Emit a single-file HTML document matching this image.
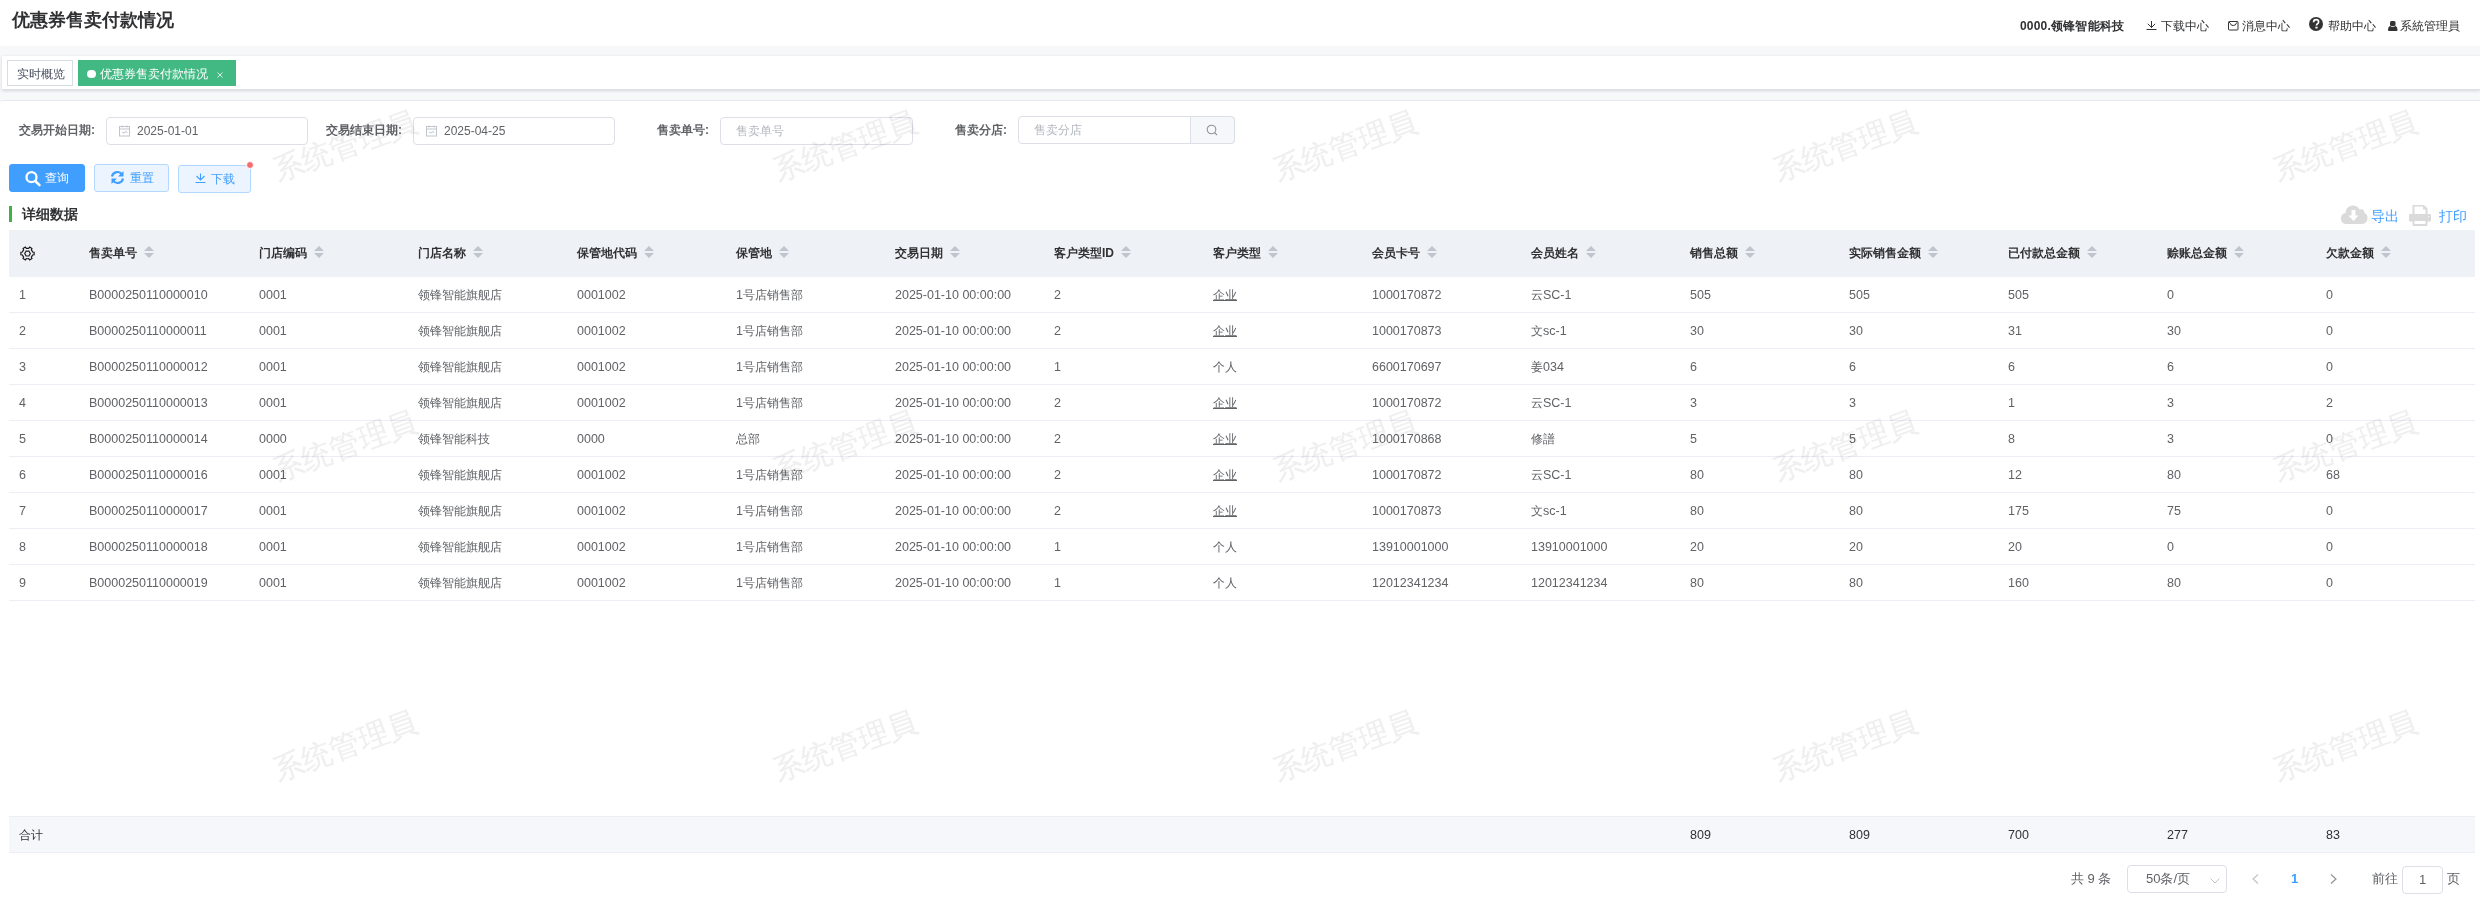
<!DOCTYPE html>
<html><head><meta charset="utf-8">
<style>
*{box-sizing:border-box;margin:0;padding:0}
html,body{width:2480px;height:901px;overflow:hidden;background:#fff;font-family:"Liberation Sans",sans-serif;font-size:12px;color:#606266;position:relative}
.abs{position:absolute}
/* header */
#title{position:absolute;left:12px;top:8px;font-size:18px;font-weight:bold;color:#303133;line-height:24px;white-space:nowrap}
.hr{position:absolute;top:18px;line-height:16px;font-size:12px;color:#303133;white-space:nowrap}
.hr svg{position:absolute}
#band{position:absolute;left:0;top:46px;width:2480px;height:55px;background:#f6f8fa}
#tabs{position:absolute;left:2px;top:56px;width:2478px;height:34px;background:#fff;border-bottom:1px solid #dde1e8;box-shadow:0 1px 3px 0 rgba(0,0,0,.12),0 0 3px 0 rgba(0,0,0,.04)}
.tag{position:absolute;top:4px;height:26px;line-height:26px;font-size:12px;white-space:nowrap}
#tag1{left:5px;width:66px;border:1px solid #d8dce5;color:#495060;background:#fff;padding-left:9px}
#tag2{left:76px;width:158px;background:#42b983;color:#fff;padding-left:22px;line-height:28px}
#tag2:before{content:"";position:absolute;left:9px;top:9.5px;width:8.5px;height:8.5px;border-radius:50%;background:#fff}
#tag2 .x{position:absolute;left:138px;top:11px}
#content{position:absolute;left:0;top:100px;width:2480px;height:801px;background:#fff;border-top:1px solid #e6e9f0;border-radius:3px 0 0 0}
/* form */
.lbl{position:absolute;top:122px;line-height:16px;font-weight:bold;color:#606266;white-space:nowrap}
.inp{position:absolute;height:28px;border:1px solid #dcdfe6;border-radius:4px;background:#fff;line-height:26px;white-space:nowrap}
.inp .t{position:absolute;top:0}
.ph{color:#b4b7be}
/* buttons */
.btn{position:absolute;height:28px;border-radius:3px;line-height:26px;white-space:nowrap;font-size:12px}
#b1{left:9px;top:164px;width:76px;background:#409eff;border:1px solid #409eff;color:#fff}
#b2{left:94px;top:164px;width:75px;background:#ecf5ff;border:1px solid #b3d8ff;color:#409eff}
#b3{left:178px;top:165px;width:73px;background:#ecf5ff;border:1px solid #b3d8ff;color:#409eff}
.btn svg{position:absolute}
.btn .t{position:absolute;top:0}
#dot{position:absolute;left:246px;top:161px;width:8px;height:8px;border-radius:50%;background:#f56c6c;border:1px solid #fff}
#secbar{position:absolute;left:9px;top:206px;width:3px;height:16px;background:#3eb149}
#sectitle{position:absolute;left:22px;top:206px;line-height:16px;font-size:14px;font-weight:bold;color:#303133}
/* table */
#thead{position:absolute;left:9px;top:230px;width:2466px;height:47px;background:#eef1f6}
.th{position:absolute;top:245px;line-height:16px;font-weight:bold;color:#303133;white-space:nowrap}
.th .sort{position:absolute;right:-17px;top:1px}
.gear{position:absolute;left:19.5px;top:245.5px}
.tr{position:absolute;left:9px;width:2466px;height:36px;border-bottom:1px solid #ebeef5}
.td{position:absolute;top:10px;line-height:16px;white-space:nowrap;color:#606266}
.tr .td{margin-left:-9px}
#tfoot{position:absolute;left:9px;top:816px;width:2466px;height:37px;background:#f5f7fa;border-top:1px solid #ebeef5;border-bottom:1px solid #ebeef5}
.tf{position:absolute;top:827px;line-height:16px;color:#303133;white-space:nowrap}
.n{font-size:12.5px}
/* export/print */
.link{position:absolute;top:208px;line-height:16px;font-size:14px;color:#409eff;white-space:nowrap}
/* pagination */
.pg{position:absolute;line-height:16px;font-size:13px;color:#606266;white-space:nowrap}
/* watermark */
.wm{position:absolute;width:160px;height:36px;line-height:36px;text-align:center;font-size:30px;color:#efefef;-webkit-text-stroke:0.25px #efefef;mix-blend-mode:multiply;transform:rotate(-20deg);white-space:nowrap;pointer-events:none}
</style></head>
<body>
<div id="title">优惠券售卖付款情况</div>
<div class="hr" style="left:2020px;font-weight:bold;letter-spacing:0.2px">0000.领锋智能科技</div>
<svg class="abs" width="12" height="12" viewBox="0 0 12 12" style="left:2146px;top:20px"><path d="M5.5 1 V7.5 M1.8 3.8 L5.5 7.5 L9.2 3.8 M0.5 9.5 H10.5" fill="none" stroke="#333" stroke-width="1"/></svg>
<div class="hr" style="left:2161px">下载中心</div>
<svg class="abs" width="12" height="12" viewBox="0 0 12 12" style="left:2228px;top:21px"><rect x="0.5" y="0.5" width="9.5" height="8.5" rx="0.8" fill="none" stroke="#333" stroke-width="1"/><path d="M1 1 L2.3 2.3 Q2.5 4.5 5.25 4.5 Q8 4.5 8.2 2.3 L9.5 1" fill="none" stroke="#333" stroke-width="1"/></svg>
<div class="hr" style="left:2242px">消息中心</div>
<svg class="abs" width="15" height="15" viewBox="0 0 15 15" style="left:2309px;top:17px"><circle cx="7" cy="7" r="7" fill="#333"/><path d="M4.6 5.2 Q4.6 2.6 7.1 2.6 Q9.6 2.6 9.6 4.9 Q9.6 6.2 8.2 6.9 Q7.5 7.3 7.5 8.6" fill="none" stroke="#fff" stroke-width="1.7"/><rect x="6.4" y="9.7" width="2.2" height="1.8" fill="#fff"/></svg>
<div class="hr" style="left:2328px">帮助中心</div>
<svg class="abs" width="11" height="12" viewBox="0 0 11 12" style="left:2388px;top:21px"><rect x="2" y="0" width="5.5" height="5" rx="1.5" fill="#333"/><path d="M2.2 4.8 L3.3 5.8 H6.2 L7.3 4.8 Q9.5 6 9.5 8.5 V9 Q9.5 10 8.5 10 H1 Q0 10 0 9 V8.5 Q0 6 2.2 4.8 Z" fill="#333"/></svg>
<div class="hr" style="left:2400px">系統管理員</div>

<div id="band"></div>
<div id="tabs">
  <div class="tag" id="tag1">实时概览</div>
  <div class="tag" id="tag2">优惠券售卖付款情况<svg class="x" width="8" height="8" viewBox="0 0 8 8"><path d="M1.5 1.5 L6.5 6.5 M6.5 1.5 L1.5 6.5" stroke="#fff" stroke-width="0.8"/></svg></div>
</div>
<div id="content"></div>

<div class="lbl" style="left:19px">交易开始日期:</div>
<div class="inp" style="left:106px;top:117px;width:202px"><svg width="12" height="12" viewBox="0 0 12 12" style="position:absolute;left:12px;top:7px"><rect x="0.5" y="1.5" width="10" height="9.5" fill="none" stroke="#c0c4cc" stroke-width="1"/><path d="M0.5 4 H10.5 M3 0.5 V2.5 M8 0.5 V2.5 M3 7 L5 8 L7 6.5 L8.5 7.5" fill="none" stroke="#c0c4cc" stroke-width="1"/></svg><span class="t" style="left:30px">2025-01-01</span></div>
<div class="lbl" style="left:326px">交易结束日期:</div>
<div class="inp" style="left:413px;top:117px;width:202px"><svg width="12" height="12" viewBox="0 0 12 12" style="position:absolute;left:12px;top:7px"><rect x="0.5" y="1.5" width="10" height="9.5" fill="none" stroke="#c0c4cc" stroke-width="1"/><path d="M0.5 4 H10.5 M3 0.5 V2.5 M8 0.5 V2.5 M3 7 L5 8 L7 6.5 L8.5 7.5" fill="none" stroke="#c0c4cc" stroke-width="1"/></svg><span class="t" style="left:30px">2025-04-25</span></div>
<div class="lbl" style="left:657px">售卖单号:</div>
<div class="inp" style="left:720px;top:117px;width:193px"><span class="t ph" style="left:15px">售卖单号</span></div>
<div class="lbl" style="left:955px">售卖分店:</div>
<div class="inp" style="left:1018px;top:116px;width:217px;background:#fff"><span class="t ph" style="left:15px">售卖分店</span>
  <div style="position:absolute;left:171px;top:-1px;width:45px;height:28px;background:#f5f7fa;border:1px solid #dcdfe6;border-radius:0 4px 4px 0"></div>
  <svg width="12" height="12" viewBox="0 0 12 12" style="position:absolute;left:187px;top:7px"><circle cx="5.5" cy="5.5" r="4.3" fill="none" stroke="#909399" stroke-width="1.1"/><path d="M8.5 8.5 L11 11" stroke="#909399" stroke-width="1.1"/></svg>
</div>

<div class="btn" id="b1"><svg width="17" height="17" viewBox="0 0 17 17" style="left:15px;top:5px"><circle cx="6.5" cy="7.2" r="5" fill="none" stroke="#fff" stroke-width="2.3"/><path d="M10.2 11 L14.5 15.2" stroke="#fff" stroke-width="2.5" stroke-linecap="round"/></svg><span class="t" style="left:35px">查询</span></div>
<div class="btn" id="b2"><svg width="15" height="15" viewBox="0 0 15 15" style="left:15px;top:5px"><path d="M2 6.5 A5.5 5.5 0 0 1 12 4.5" fill="none" stroke="#409eff" stroke-width="2.2"/><path d="M13.5 1 V6.5 H8 Z" fill="#409eff"/><path d="M13 8.5 A5.5 5.5 0 0 1 3 10.5" fill="none" stroke="#409eff" stroke-width="2.2"/><path d="M1.5 14 V8.5 H7 Z" fill="#409eff"/></svg><span class="t" style="left:35px">重置</span></div>
<div class="btn" id="b3"><svg width="12" height="12" viewBox="0 0 12 12" style="left:15.5px;top:7px"><path d="M5.5 0.5 V7 M1.5 3 L5.5 7 L9.5 3 M0.5 9.5 H10.5" fill="none" stroke="#409eff" stroke-width="1.1"/></svg><span class="t" style="left:32px;top:-0.5px">下载</span></div>
<div id="dot"></div>

<div id="secbar"></div>
<div id="sectitle">详细数据</div>

<svg width="27" height="20" viewBox="0 0 27 20" style="position:absolute;left:2341px;top:205px"><path d="M6 19 Q0 19 0 13.5 Q0 8.5 4.5 8 Q5 1 11.5 0.5 Q16.5 0.5 18.5 4.5 Q19.5 4 21 4.2 Q23 4.5 23.5 8 Q27 9.5 26.5 13.5 Q26 19 20 19 Z" fill="#dadada"/><path d="M10.5 5 H14.5 V10.5 H17.5 L12.5 16 L7.5 10.5 H10.5 Z" fill="#fff"/></svg>
<div class="link" style="left:2371px">导出</div>
<svg width="23" height="21" viewBox="0 0 23 21" style="position:absolute;left:2409px;top:205px"><path d="M3.5 0 H15 L18.5 3.5 V9 H3.5 Z" fill="#dadada"/><path d="M5.5 1.5 H14 V4.5 H16.5 V9.5 H5.5 Z" fill="#fff"/><rect x="0" y="9" width="22" height="7.5" rx="1" fill="#dadada"/><path d="M3.5 14 H18.5 V21 H3.5 Z" fill="#dadada"/><rect x="5.5" y="16" width="11" height="3" fill="#fff"/><path d="M19 10.5 L20.5 12 L19 12 Z" fill="#fff"/></svg>
<div class="link" style="left:2439px">打印</div>

<div id="thead"></div>
<svg class="gear" width="15" height="15" viewBox="0 0 14 14"><path d="M11.24 9.45 L11.69 8.43 L13.18 8.20 L13.18 5.80 L11.69 5.57 L11.24 4.55 L10.58 3.66 L11.13 2.25 L9.05 1.04 L8.10 2.23 L7.00 2.10 L5.90 2.23 L4.95 1.04 L2.87 2.25 L3.42 3.66 L2.76 4.55 L2.31 5.57 L0.82 5.80 L0.82 8.20 L2.31 8.43 L2.76 9.45 L3.42 10.34 L2.87 11.75 L4.95 12.96 L5.90 11.77 L7.00 11.90 L8.10 11.77 L9.05 12.96 L11.13 11.75 L10.58 10.34 Z" fill="none" stroke="#1a1a1a" stroke-width="1.1" stroke-linejoin="miter"/><path d="M4.4 7 L5.7 4.7 H8.3 L9.6 7 L8.3 9.3 H5.7 Z" fill="none" stroke="#1a1a1a" stroke-width="1.1"/></svg>
<div class="th" style="left:89px">售卖单号<svg class="sort" width="10" height="13" viewBox="0 0 10 13"><path d="M5 0 L10 5 L0 5 Z" fill="#bfc4cd"/><path d="M0 7 L10 7 L5 12 Z" fill="#bfc4cd"/></svg></div>
<div class="th" style="left:259px">门店编码<svg class="sort" width="10" height="13" viewBox="0 0 10 13"><path d="M5 0 L10 5 L0 5 Z" fill="#bfc4cd"/><path d="M0 7 L10 7 L5 12 Z" fill="#bfc4cd"/></svg></div>
<div class="th" style="left:418px">门店名称<svg class="sort" width="10" height="13" viewBox="0 0 10 13"><path d="M5 0 L10 5 L0 5 Z" fill="#bfc4cd"/><path d="M0 7 L10 7 L5 12 Z" fill="#bfc4cd"/></svg></div>
<div class="th" style="left:577px">保管地代码<svg class="sort" width="10" height="13" viewBox="0 0 10 13"><path d="M5 0 L10 5 L0 5 Z" fill="#bfc4cd"/><path d="M0 7 L10 7 L5 12 Z" fill="#bfc4cd"/></svg></div>
<div class="th" style="left:736px">保管地<svg class="sort" width="10" height="13" viewBox="0 0 10 13"><path d="M5 0 L10 5 L0 5 Z" fill="#bfc4cd"/><path d="M0 7 L10 7 L5 12 Z" fill="#bfc4cd"/></svg></div>
<div class="th" style="left:895px">交易日期<svg class="sort" width="10" height="13" viewBox="0 0 10 13"><path d="M5 0 L10 5 L0 5 Z" fill="#bfc4cd"/><path d="M0 7 L10 7 L5 12 Z" fill="#bfc4cd"/></svg></div>
<div class="th" style="left:1054px">客户类型ID<svg class="sort" width="10" height="13" viewBox="0 0 10 13"><path d="M5 0 L10 5 L0 5 Z" fill="#bfc4cd"/><path d="M0 7 L10 7 L5 12 Z" fill="#bfc4cd"/></svg></div>
<div class="th" style="left:1213px">客户类型<svg class="sort" width="10" height="13" viewBox="0 0 10 13"><path d="M5 0 L10 5 L0 5 Z" fill="#bfc4cd"/><path d="M0 7 L10 7 L5 12 Z" fill="#bfc4cd"/></svg></div>
<div class="th" style="left:1372px">会员卡号<svg class="sort" width="10" height="13" viewBox="0 0 10 13"><path d="M5 0 L10 5 L0 5 Z" fill="#bfc4cd"/><path d="M0 7 L10 7 L5 12 Z" fill="#bfc4cd"/></svg></div>
<div class="th" style="left:1531px">会员姓名<svg class="sort" width="10" height="13" viewBox="0 0 10 13"><path d="M5 0 L10 5 L0 5 Z" fill="#bfc4cd"/><path d="M0 7 L10 7 L5 12 Z" fill="#bfc4cd"/></svg></div>
<div class="th" style="left:1690px">销售总额<svg class="sort" width="10" height="13" viewBox="0 0 10 13"><path d="M5 0 L10 5 L0 5 Z" fill="#bfc4cd"/><path d="M0 7 L10 7 L5 12 Z" fill="#bfc4cd"/></svg></div>
<div class="th" style="left:1849px">实际销售金额<svg class="sort" width="10" height="13" viewBox="0 0 10 13"><path d="M5 0 L10 5 L0 5 Z" fill="#bfc4cd"/><path d="M0 7 L10 7 L5 12 Z" fill="#bfc4cd"/></svg></div>
<div class="th" style="left:2008px">已付款总金额<svg class="sort" width="10" height="13" viewBox="0 0 10 13"><path d="M5 0 L10 5 L0 5 Z" fill="#bfc4cd"/><path d="M0 7 L10 7 L5 12 Z" fill="#bfc4cd"/></svg></div>
<div class="th" style="left:2167px">赊账总金额<svg class="sort" width="10" height="13" viewBox="0 0 10 13"><path d="M5 0 L10 5 L0 5 Z" fill="#bfc4cd"/><path d="M0 7 L10 7 L5 12 Z" fill="#bfc4cd"/></svg></div>
<div class="th" style="left:2326px">欠款金额<svg class="sort" width="10" height="13" viewBox="0 0 10 13"><path d="M5 0 L10 5 L0 5 Z" fill="#bfc4cd"/><path d="M0 7 L10 7 L5 12 Z" fill="#bfc4cd"/></svg></div>
<div class="tr" style="top:277px">
<div class="td" style="left:19px"><span class="n">1</span></div>
<div class="td" style="left:89px"><span class="n">B0000250110000010</span></div>
<div class="td" style="left:259px"><span class="n">0001</span></div>
<div class="td" style="left:418px">领锋智能旗舰店</div>
<div class="td" style="left:577px"><span class="n">0001002</span></div>
<div class="td" style="left:736px"><span class="n">1</span>号店销售部</div>
<div class="td" style="left:895px"><span class="n">2025-01-10 00:00:00</span></div>
<div class="td" style="left:1054px"><span class="n">2</span></div>
<div class="td" style="left:1213px"><u>企业</u></div>
<div class="td" style="left:1372px"><span class="n">1000170872</span></div>
<div class="td" style="left:1531px">云<span class="n">SC-1</span></div>
<div class="td" style="left:1690px"><span class="n">505</span></div>
<div class="td" style="left:1849px"><span class="n">505</span></div>
<div class="td" style="left:2008px"><span class="n">505</span></div>
<div class="td" style="left:2167px"><span class="n">0</span></div>
<div class="td" style="left:2326px"><span class="n">0</span></div>
</div>
<div class="tr" style="top:313px">
<div class="td" style="left:19px"><span class="n">2</span></div>
<div class="td" style="left:89px"><span class="n">B0000250110000011</span></div>
<div class="td" style="left:259px"><span class="n">0001</span></div>
<div class="td" style="left:418px">领锋智能旗舰店</div>
<div class="td" style="left:577px"><span class="n">0001002</span></div>
<div class="td" style="left:736px"><span class="n">1</span>号店销售部</div>
<div class="td" style="left:895px"><span class="n">2025-01-10 00:00:00</span></div>
<div class="td" style="left:1054px"><span class="n">2</span></div>
<div class="td" style="left:1213px"><u>企业</u></div>
<div class="td" style="left:1372px"><span class="n">1000170873</span></div>
<div class="td" style="left:1531px">文<span class="n">sc-1</span></div>
<div class="td" style="left:1690px"><span class="n">30</span></div>
<div class="td" style="left:1849px"><span class="n">30</span></div>
<div class="td" style="left:2008px"><span class="n">31</span></div>
<div class="td" style="left:2167px"><span class="n">30</span></div>
<div class="td" style="left:2326px"><span class="n">0</span></div>
</div>
<div class="tr" style="top:349px">
<div class="td" style="left:19px"><span class="n">3</span></div>
<div class="td" style="left:89px"><span class="n">B0000250110000012</span></div>
<div class="td" style="left:259px"><span class="n">0001</span></div>
<div class="td" style="left:418px">领锋智能旗舰店</div>
<div class="td" style="left:577px"><span class="n">0001002</span></div>
<div class="td" style="left:736px"><span class="n">1</span>号店销售部</div>
<div class="td" style="left:895px"><span class="n">2025-01-10 00:00:00</span></div>
<div class="td" style="left:1054px"><span class="n">1</span></div>
<div class="td" style="left:1213px">个人</div>
<div class="td" style="left:1372px"><span class="n">6600170697</span></div>
<div class="td" style="left:1531px">姜<span class="n">034</span></div>
<div class="td" style="left:1690px"><span class="n">6</span></div>
<div class="td" style="left:1849px"><span class="n">6</span></div>
<div class="td" style="left:2008px"><span class="n">6</span></div>
<div class="td" style="left:2167px"><span class="n">6</span></div>
<div class="td" style="left:2326px"><span class="n">0</span></div>
</div>
<div class="tr" style="top:385px">
<div class="td" style="left:19px"><span class="n">4</span></div>
<div class="td" style="left:89px"><span class="n">B0000250110000013</span></div>
<div class="td" style="left:259px"><span class="n">0001</span></div>
<div class="td" style="left:418px">领锋智能旗舰店</div>
<div class="td" style="left:577px"><span class="n">0001002</span></div>
<div class="td" style="left:736px"><span class="n">1</span>号店销售部</div>
<div class="td" style="left:895px"><span class="n">2025-01-10 00:00:00</span></div>
<div class="td" style="left:1054px"><span class="n">2</span></div>
<div class="td" style="left:1213px"><u>企业</u></div>
<div class="td" style="left:1372px"><span class="n">1000170872</span></div>
<div class="td" style="left:1531px">云<span class="n">SC-1</span></div>
<div class="td" style="left:1690px"><span class="n">3</span></div>
<div class="td" style="left:1849px"><span class="n">3</span></div>
<div class="td" style="left:2008px"><span class="n">1</span></div>
<div class="td" style="left:2167px"><span class="n">3</span></div>
<div class="td" style="left:2326px"><span class="n">2</span></div>
</div>
<div class="tr" style="top:421px">
<div class="td" style="left:19px"><span class="n">5</span></div>
<div class="td" style="left:89px"><span class="n">B0000250110000014</span></div>
<div class="td" style="left:259px"><span class="n">0000</span></div>
<div class="td" style="left:418px">领锋智能科技</div>
<div class="td" style="left:577px"><span class="n">0000</span></div>
<div class="td" style="left:736px">总部</div>
<div class="td" style="left:895px"><span class="n">2025-01-10 00:00:00</span></div>
<div class="td" style="left:1054px"><span class="n">2</span></div>
<div class="td" style="left:1213px"><u>企业</u></div>
<div class="td" style="left:1372px"><span class="n">1000170868</span></div>
<div class="td" style="left:1531px">修譜</div>
<div class="td" style="left:1690px"><span class="n">5</span></div>
<div class="td" style="left:1849px"><span class="n">5</span></div>
<div class="td" style="left:2008px"><span class="n">8</span></div>
<div class="td" style="left:2167px"><span class="n">3</span></div>
<div class="td" style="left:2326px"><span class="n">0</span></div>
</div>
<div class="tr" style="top:457px">
<div class="td" style="left:19px"><span class="n">6</span></div>
<div class="td" style="left:89px"><span class="n">B0000250110000016</span></div>
<div class="td" style="left:259px"><span class="n">0001</span></div>
<div class="td" style="left:418px">领锋智能旗舰店</div>
<div class="td" style="left:577px"><span class="n">0001002</span></div>
<div class="td" style="left:736px"><span class="n">1</span>号店销售部</div>
<div class="td" style="left:895px"><span class="n">2025-01-10 00:00:00</span></div>
<div class="td" style="left:1054px"><span class="n">2</span></div>
<div class="td" style="left:1213px"><u>企业</u></div>
<div class="td" style="left:1372px"><span class="n">1000170872</span></div>
<div class="td" style="left:1531px">云<span class="n">SC-1</span></div>
<div class="td" style="left:1690px"><span class="n">80</span></div>
<div class="td" style="left:1849px"><span class="n">80</span></div>
<div class="td" style="left:2008px"><span class="n">12</span></div>
<div class="td" style="left:2167px"><span class="n">80</span></div>
<div class="td" style="left:2326px"><span class="n">68</span></div>
</div>
<div class="tr" style="top:493px">
<div class="td" style="left:19px"><span class="n">7</span></div>
<div class="td" style="left:89px"><span class="n">B0000250110000017</span></div>
<div class="td" style="left:259px"><span class="n">0001</span></div>
<div class="td" style="left:418px">领锋智能旗舰店</div>
<div class="td" style="left:577px"><span class="n">0001002</span></div>
<div class="td" style="left:736px"><span class="n">1</span>号店销售部</div>
<div class="td" style="left:895px"><span class="n">2025-01-10 00:00:00</span></div>
<div class="td" style="left:1054px"><span class="n">2</span></div>
<div class="td" style="left:1213px"><u>企业</u></div>
<div class="td" style="left:1372px"><span class="n">1000170873</span></div>
<div class="td" style="left:1531px">文<span class="n">sc-1</span></div>
<div class="td" style="left:1690px"><span class="n">80</span></div>
<div class="td" style="left:1849px"><span class="n">80</span></div>
<div class="td" style="left:2008px"><span class="n">175</span></div>
<div class="td" style="left:2167px"><span class="n">75</span></div>
<div class="td" style="left:2326px"><span class="n">0</span></div>
</div>
<div class="tr" style="top:529px">
<div class="td" style="left:19px"><span class="n">8</span></div>
<div class="td" style="left:89px"><span class="n">B0000250110000018</span></div>
<div class="td" style="left:259px"><span class="n">0001</span></div>
<div class="td" style="left:418px">领锋智能旗舰店</div>
<div class="td" style="left:577px"><span class="n">0001002</span></div>
<div class="td" style="left:736px"><span class="n">1</span>号店销售部</div>
<div class="td" style="left:895px"><span class="n">2025-01-10 00:00:00</span></div>
<div class="td" style="left:1054px"><span class="n">1</span></div>
<div class="td" style="left:1213px">个人</div>
<div class="td" style="left:1372px"><span class="n">13910001000</span></div>
<div class="td" style="left:1531px"><span class="n">13910001000</span></div>
<div class="td" style="left:1690px"><span class="n">20</span></div>
<div class="td" style="left:1849px"><span class="n">20</span></div>
<div class="td" style="left:2008px"><span class="n">20</span></div>
<div class="td" style="left:2167px"><span class="n">0</span></div>
<div class="td" style="left:2326px"><span class="n">0</span></div>
</div>
<div class="tr" style="top:565px">
<div class="td" style="left:19px"><span class="n">9</span></div>
<div class="td" style="left:89px"><span class="n">B0000250110000019</span></div>
<div class="td" style="left:259px"><span class="n">0001</span></div>
<div class="td" style="left:418px">领锋智能旗舰店</div>
<div class="td" style="left:577px"><span class="n">0001002</span></div>
<div class="td" style="left:736px"><span class="n">1</span>号店销售部</div>
<div class="td" style="left:895px"><span class="n">2025-01-10 00:00:00</span></div>
<div class="td" style="left:1054px"><span class="n">1</span></div>
<div class="td" style="left:1213px">个人</div>
<div class="td" style="left:1372px"><span class="n">12012341234</span></div>
<div class="td" style="left:1531px"><span class="n">12012341234</span></div>
<div class="td" style="left:1690px"><span class="n">80</span></div>
<div class="td" style="left:1849px"><span class="n">80</span></div>
<div class="td" style="left:2008px"><span class="n">160</span></div>
<div class="td" style="left:2167px"><span class="n">80</span></div>
<div class="td" style="left:2326px"><span class="n">0</span></div>
</div>
<div id="tfoot"></div>
<div class="tf" style="left:19px">合计</div>
<div class="tf" style="left:1690px"><span class="n">809</span></div>
<div class="tf" style="left:1849px"><span class="n">809</span></div>
<div class="tf" style="left:2008px"><span class="n">700</span></div>
<div class="tf" style="left:2167px"><span class="n">277</span></div>
<div class="tf" style="left:2326px"><span class="n">83</span></div>

<div class="pg" style="left:2071px;top:871px">共 9 条</div>
<div class="inp" style="left:2127px;top:865px;width:100px;font-size:13px"><span class="t" style="left:18px;color:#606266">50条/页</span><svg width="10" height="6" viewBox="0 0 10 6" style="position:absolute;left:82px;top:12px"><path d="M0.5 0.5 L5 5 L9.5 0.5" fill="none" stroke="#c0c4cc" stroke-width="1"/></svg></div>
<svg width="7" height="10" viewBox="0 0 7 10" style="position:absolute;left:2252px;top:874px"><path d="M6 0.5 L1 5 L6 9.5" fill="none" stroke="#c0c4cc" stroke-width="1.2"/></svg>
<div class="pg" style="left:2291px;top:871px;color:#409eff;font-weight:bold">1</div>
<svg width="7" height="10" viewBox="0 0 7 10" style="position:absolute;left:2330px;top:874px"><path d="M1 0.5 L6 5 L1 9.5" fill="none" stroke="#909399" stroke-width="1.2"/></svg>
<div class="pg" style="left:2372px;top:871px">前往</div>
<div class="inp" style="left:2402px;top:866px;width:41px;font-size:13px;text-align:center;color:#606266">1</div>
<div class="pg" style="left:2447px;top:871px">页</div>

<div class="wm" style="left:265px;top:128px">系统管理員</div>
<div class="wm" style="left:765px;top:128px">系统管理員</div>
<div class="wm" style="left:1265px;top:128px">系统管理員</div>
<div class="wm" style="left:1765px;top:128px">系统管理員</div>
<div class="wm" style="left:2265px;top:128px">系统管理員</div>
<div class="wm" style="left:265px;top:428px">系统管理員</div>
<div class="wm" style="left:765px;top:428px">系统管理員</div>
<div class="wm" style="left:1265px;top:428px">系统管理員</div>
<div class="wm" style="left:1765px;top:428px">系统管理員</div>
<div class="wm" style="left:2265px;top:428px">系统管理員</div>
<div class="wm" style="left:265px;top:728px">系统管理員</div>
<div class="wm" style="left:765px;top:728px">系统管理員</div>
<div class="wm" style="left:1265px;top:728px">系统管理員</div>
<div class="wm" style="left:1765px;top:728px">系统管理員</div>
<div class="wm" style="left:2265px;top:728px">系统管理員</div>
</body></html>
